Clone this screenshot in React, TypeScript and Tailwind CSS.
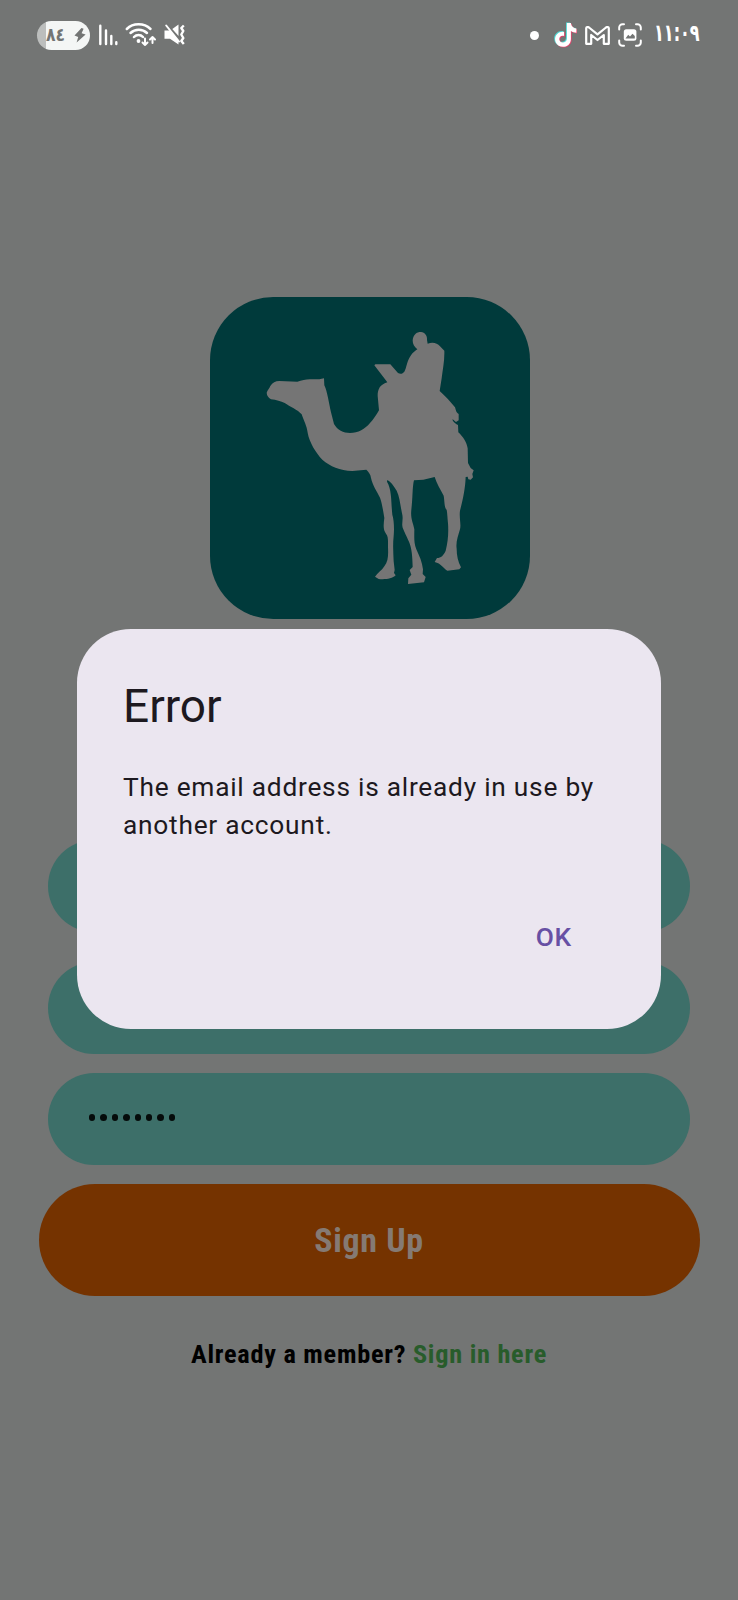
function BatteryPill() {
  return (
    <div className="flex h-[29px] w-[53px] items-center overflow-hidden rounded-full bg-[linear-gradient(90deg,#bcbebd_9px,#f4f6f5_9px)] pl-[9px]">
      <span className="w-[20px] origin-left scale-x-[0.82] pb-[2px] text-[19px] leading-none font-bold text-[#737574]">٨٤</span>
      <svg className="ml-[8px] h-[15px] w-3" viewBox="0 0 12 15" fill="#737574">
        <path d="M7.500 0 L0.500 7.600 L4.200 9 L2.600 14.500 L11.600 6.600 L7.600 5.200 L9.600 0.800 Z" />
      </svg>
    </div>
  );
}

function SignalIcon() {
  return (
    <svg className="h-[22px] w-5" viewBox="0 0 20 22" stroke="#fff" strokeWidth="2.400" strokeLinecap="round">
      <path d="M2.300 1.800V20M8 6.500V20M13.300 12V20M18.300 18.300V20" />
    </svg>
  );
}

function WifiIcon() {
  return (
    <svg className="h-6 w-8" viewBox="0 0 32 24" fill="none" stroke="#fff" strokeWidth="2.500" strokeLinecap="round" strokeLinejoin="round">
      <path d="M1.800 6 C8 -0.200 19 -0.200 25.500 6M5.500 10 C10 5.600 17.500 5.600 22 10M9 14 C11.500 11.300 15.500 11.300 18 14" />
      <circle cx="13.500" cy="18" r="1.900" fill="#fff" stroke="none" />
      <path strokeWidth="2" d="M20 15.500v6.500M17.500 19.500l2.500 2.500 2.500 -2.500M27.500 20v-6M25 16.500l2.500 -2.500 2.500 2.500" />
    </svg>
  );
}

function MutedIcon() {
  return (
    <svg className="h-[22px] w-[22px]" viewBox="0 0 22 22" fill="none">
      <path d="M0.500 6.500H6L14.500 16.500V20.500L6 14.800H0.500Z" fill="#fff" />
      <path d="M8.300 5L14.500 0.500V12Z" fill="#fff" />
      <path d="M2.200 1.500L15 17.500" stroke="#fff" strokeWidth="2" strokeLinecap="round" />
      <path
        d="M19.800 1.500L17.300 4L19.300 7L17.300 10.500L19.300 14L17.300 17L19.800 20"
        stroke="#fff"
        strokeWidth="2.400"
        strokeLinejoin="round"
      />
    </svg>
  );
}

const NOTE_PATH =
  "M12.500 0H16.500C16.900 3.200 18.800 5.200 22 5.500V9.600C20 9.600 18.100 9 16.500 7.900V15.800C16.500 24.800 4.500 26.500 1.300 19.200C-1.200 13 4 7.600 9.700 8.700V13C6.500 12 4.400 14.200 5 16.800C6 20.700 12.500 20 12.500 15.300Z";

function TikTokIcon() {
  return (
    <svg className="h-[26px] w-6" viewBox="-0.500 -0.500 24 26">
      <path d={NOTE_PATH} fill="#4fd9d5" />
      <path d={NOTE_PATH} fill="#e8406b" transform="translate(1.700 1.300)" />
      <path d={NOTE_PATH} fill="#fff" transform="translate(0.900 0.600)" />
    </svg>
  );
}

function GmailIcon() {
  return (
    <svg className="h-[19px] w-[25px]" viewBox="0 0 25 19" fill="none" stroke="#fff" strokeWidth="2.200" strokeLinejoin="round">
      <path d="M1.200 2.200 C1.200 1 2.800 0.600 4 1.500 L12.500 8.300 L21 1.500 C22.200 0.600 23.800 1 23.800 2.200 V17.800 H18.800 V9 L12.500 14 L6.200 9 V17.800 H1.200 Z" />
    </svg>
  );
}

function CaptureIcon() {
  return (
    <svg className="h-6 w-6" viewBox="0 0 24 24" fill="none" stroke="#fff" strokeWidth="2" strokeLinecap="round">
      <path d="M1.200 6.500V4.500a3.300 3.300 0 0 1 3.300 -3.300H6M18 1.200h1.500a3.300 3.300 0 0 1 3.300 3.300V6.500M22.800 17.500v2a3.300 3.300 0 0 1 -3.300 3.300H18M6 22.800H4.500a3.300 3.300 0 0 1 -3.300 -3.300V17.500" />
      <rect x="5.800" y="6.300" width="12.600" height="11.500" rx="2.500" fill="#fff" stroke="none" />
      <path d="M7.500 15.500L10.200 11.800L12 13.500L14.500 10.700L16.800 13V15.500Z" fill="#737574" stroke="none" />
    </svg>
  );
}

function StatusBar() {
  return (
    <header className="flex h-[70px] items-center justify-between pr-[38px] pl-[37px] font-['DejaVu_Sans',sans-serif]">
      <div className="flex items-center">
        <BatteryPill />
        <div className="ml-2 flex items-center">
          <SignalIcon />
          <span className="ml-[7px]">
            <WifiIcon />
          </span>
          <span className="ml-[7px]">
            <MutedIcon />
          </span>
        </div>
      </div>
      <div className="flex items-center">
        <span className="mr-[14px] size-[9px] rounded-full bg-white" />
        <TikTokIcon />
        <span className="ml-2">
          <GmailIcon />
        </span>
        <span className="ml-2">
          <CaptureIcon />
        </span>
        <span className="ml-[12px] w-[46px] origin-left scale-x-[0.67] pb-[4px] text-[24px] leading-none font-bold text-white">
          ١١:٠٩
        </span>
      </div>
    </header>
  );
}

function CamelLogo() {
  return (
    <svg className="ml-[1.400px] h-[322px] w-[320px] shrink-0" viewBox="30 21 960 966">
      <rect x="30" y="21" width="960" height="966" rx="190" fill="#003a3b" />
      <path
        fill="#757575"
        d="M200 308 C203 300 208 296 211 288 C218 278 226 273 238 273 L292 275 C308 270 322 266 338 268 L358 268 L372 265 L373 286 C382 305 387 340 393 367 L402 402 C412 420 430 429 450 429 C475 429 495 417 510 399 C520 389 529 375 537 361 L533 318 C533 297 540 284 562 277 L523 226 L526 223 L571 223 L594 249 C602 253 608 251 613 245 C620 232 621 212 632 197 C638 188 645 183 652 178 C640 169 636 157 639 145 C643 131 653 125 663 126 C676 128 682 138 681 150 L683 161 C698 156 712 159 720 169 L733 182 C734 214 728 238 725 265 L719 303 C736 319 752 335 765 352 C768 360 767 366 776 372 L776 391 L768 396 C763 392 759 386 757 389 C760 397 769 402 774 405 L775 427 C790 442 800 456 803 475 L804 519 L812 534 L821 541 L817 552 L819 562 L812 569 L805 568 L803 560 L797 561 C796 595 788 632 780 662 C777 682 784 702 780 718 C774 738 767 757 770 776 C770 797 774 815 783 832 L778 838 L742 842 C730 835 723 820 704 816 L711 804 C723 804 731 796 737 782 C744 756 746 728 744 700 C742 680 742 670 740 660 C732 650 734 632 731 617 C721 599 710 580 704 561 L670 569 L642 571 C637 589 638 630 634 659 C631 687 640 700 643 718 C643 740 641 758 649 778 C659 800 666 815 669 838 L668 852 L677 861 L672 877 L624 882 L625 865 L634 854 L629 840 L638 831 C637 800 636 777 627 755 C619 737 614 728 608 713 C604 700 611 688 606 670 C600 641 599 620 590 602 C580 586 571 574 562 570 L561 575 C576 600 573 637 577 674 C582 690 583 717 581 738 C578 765 580 790 581 814 L584 840 L582 849 L587 856 C577 867 553 869 536 867 L525 860 C533 848 545 842 553 829 C565 815 565 795 564 772 C564 750 565 740 558 731 C548 718 551 702 553 684 C549 660 546 640 540 623 C530 603 518 587 513 564 C512 552 506 547 499 539 L457 543 C419 542 391 529 367 509 C347 487 328 457 323 428 C320 406 312 394 305 373 C293 359 270 350 254 339 C243 335 229 329 213 328 C207 323 200 318 200 308 Z"
      />
    </svg>
  );
}

function ErrorDialog() {
  return (
    <section
      role="alertdialog"
      className="absolute top-[629px] left-[77px] flex h-[400px] w-[584px] flex-col rounded-[54px] bg-[#ebe6f0] px-[46px] pt-[47px] text-[#1d1920]"
    >
      <h1 className="text-[46px] leading-[60px]">Error</h1>
      <p className="mt-[32px] text-[26.300px] leading-[38px] tracking-[0.750px] whitespace-nowrap">
        The email address is already in use by
        <br />
        another account.
      </p>
      <button className="mt-[74px] mr-[43.500px] self-end text-[26.300px] leading-[38px] font-medium tracking-[0.500px] text-[#6750a4]">
        OK
      </button>
    </section>
  );
}

export default function App() {
  return (
    <div className="relative flex h-[1600px] w-[738px] flex-col overflow-hidden bg-[#737574] font-[Roboto,sans-serif]">
      <StatusBar />
      <main className="flex flex-col items-center pt-[227px]">
        <CamelLogo />
        <div className="mt-[221px] h-[92px] w-[642px] rounded-[46px] bg-[#3d6f69]" />
        <div className="mt-[30px] h-[92px] w-[642px] rounded-[46px] bg-[#3d6f69]" />
        <div className="mt-[19px] flex h-[92px] w-[642px] items-center gap-[5px] rounded-[46px] bg-[#3d6f69] pb-[3px] pl-[41px]">
          {Array.from({ length: 8 }, (_, i) => (
            <span key={i} className="size-[6.400px] rounded-full bg-[#050b0a]" />
          ))}
        </div>
        <button className="mt-[19px] h-[112px] w-[661px] rounded-full bg-[#753300] text-[34px] font-bold tracking-[0.650px] text-[#857a73] [font-family:'Roboto_Condensed',Roboto,sans-serif] [font-stretch:75%]">
          Sign Up
        </button>
        <p className="mt-[39px] text-[26.300px] leading-[38px] font-bold tracking-[0.730px] text-black [font-family:'Roboto_Condensed',Roboto,sans-serif] [font-stretch:75%]">
          Already a member? <a className="text-[#285c2b]">Sign in here</a>
        </p>
      </main>
      <ErrorDialog />
    </div>
  );
}
